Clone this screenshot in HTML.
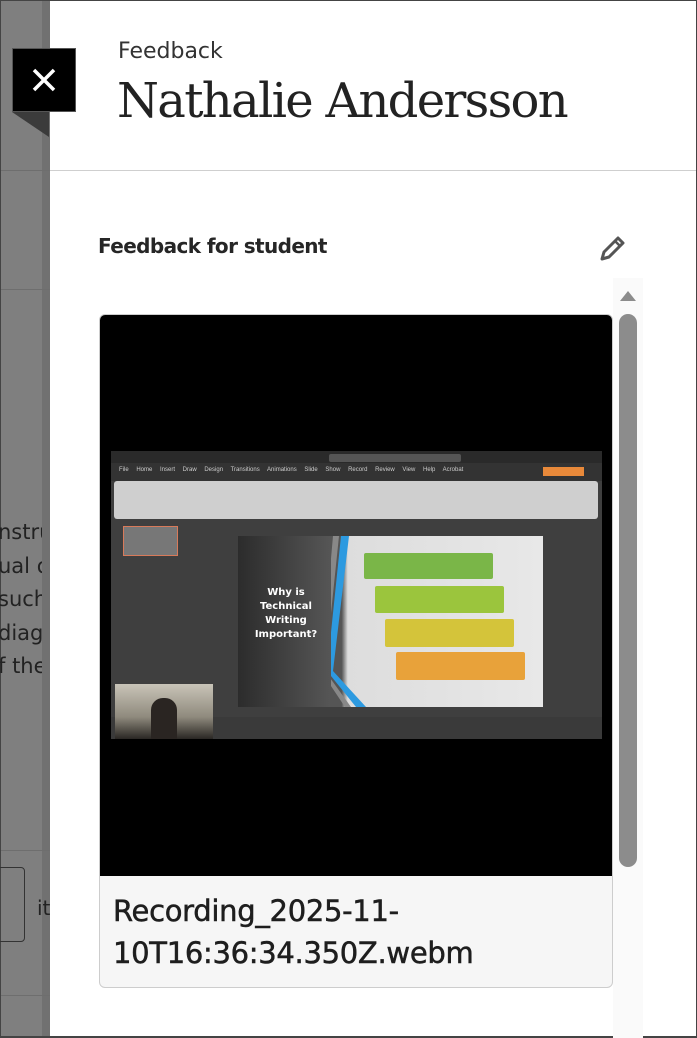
<!DOCTYPE html>
<html><head><meta charset="utf-8"><style>
*{margin:0;padding:0;box-sizing:border-box}
body{width:697px;height:1038px;position:relative;overflow:hidden;background:#fff;font-family:"Liberation Sans","DejaVu Sans",sans-serif}
.a{position:absolute}
</style></head><body>
<div class="a" style="left:0;top:0;width:50px;height:1038px;background:#7f7f7f"></div>
<div class="a" style="left:42px;top:0;width:8px;height:1038px;background:#717171"></div>
<div class="a" style="left:0;top:170px;width:50px;height:1px;background:#6e6e6e"></div>
<div class="a" style="left:0;top:289px;width:50px;height:1px;background:#6e6e6e"></div>
<div class="a" style="left:0;top:850px;width:50px;height:1px;background:#6e6e6e"></div>
<div class="a" style="left:0;top:995px;width:50px;height:1px;background:#6e6e6e"></div>
<div class="a" style="left:0;top:0;width:697px;height:1px;background:#444"></div>
<div class="a" style="left:0;top:0;width:1px;height:1038px;background:#444"></div>
<div class="a" style="left:0;top:1036px;width:697px;height:2px;background:#444"></div>
<div class="a" style="left:696px;top:0;width:1px;height:1038px;background:#444"></div>
<div class="a" style="left:-2px;top:516px;font:21px/33.5px 'DejaVu Sans',sans-serif;color:#222;white-space:pre;width:44px;overflow:hidden">nstru
ual o
such
diagr
f they</div>
<div class="a" style="left:-10px;top:867px;width:35px;height:75px;border:1px solid #333;border-radius:4px"></div>
<div class="a" style="left:37px;top:896px;font:20px 'DejaVu Sans',sans-serif;color:#222">it</div>
<div class="a" style="left:12px;top:112px;width:0;height:0;border-left:37px solid transparent;border-top:25px solid #3b3b3b;"></div>
<div class="a" style="left:12px;top:48px;width:64px;height:64px;background:#000;border:1px solid #555"></div>
<svg class="a" style="left:30px;top:66px" width="28" height="28" viewBox="0 0 28 28"><path d="M4 4L24 24M24 4L4 24" stroke="#fff" stroke-width="3.5"/></svg>
<div class="a" style="left:118px;top:39px;font:22px 'DejaVu Sans',sans-serif;color:#333">Feedback</div>
<div class="a" style="left:117px;top:73px;font:48px 'DejaVu Serif','Liberation Serif',serif;color:#222;letter-spacing:-1.7px">Nathalie Andersson</div>
<div class="a" style="left:50px;top:170px;width:646px;height:1px;background:#cfcfcf"></div>
<div class="a" style="left:98px;top:234px;font:bold 20px 'DejaVu Sans',sans-serif;color:#262626;letter-spacing:-0.6px">Feedback for student</div>
<svg class="a" style="left:598px;top:233px" width="30" height="30" viewBox="0 0 30 30"><path d="M4 26L6 19L20 5L25 10L11 24Z" fill="none" stroke="#555" stroke-width="3" stroke-linejoin="round"/><path d="M17 8L22 13" stroke="#555" stroke-width="2.5"/></svg>
<div class="a" style="left:613px;top:278px;width:30px;height:760px;background:#fafafa"></div>
<svg class="a" style="left:619px;top:289px" width="18" height="14"><path d="M1 12L9 2L17 12Z" fill="#8c8c8c"/></svg>
<div class="a" style="left:619px;top:314px;width:18px;height:553px;background:#8c8c8c;border-radius:9px"></div>
<div class="a" style="left:99px;top:314px;width:514px;height:674px;border:1px solid #cdcdcd;border-radius:6px;background:#f6f6f6;overflow:hidden">
 <div class="a" style="left:0;top:0;width:512px;height:561px;background:#000"></div>
 <div class="a" style="left:13px;top:575px;font:29px/42px 'DejaVu Sans',sans-serif;color:#1e1e1e;letter-spacing:-0.3px;-webkit-text-stroke:0.5px #1e1e1e">Recording_2025-11-<br>10T16:36:34.350Z.webm</div>
</div>
<div class="a" style="left:111px;top:451px;width:491px;height:288px;background:#3f3f3f;overflow:hidden">
 <div class="a" style="left:0;top:0;width:491px;height:12px;background:#2a2a2a"></div>
 <div class="a" style="left:218px;top:3px;width:132px;height:8px;background:#555;border-radius:2px"></div>
 <div class="a" style="left:0;top:12px;width:491px;height:18px;background:#333"></div>
 <div class="a" style="left:8px;top:16px;font:6px sans-serif;color:#ccc;white-space:nowrap;word-spacing:6px">File Home Insert Draw Design Transitions Animations Slide Show Record Review View Help Acrobat</div>
 <div class="a" style="left:432px;top:16px;width:41px;height:9px;background:#e8893a"></div>
 <div class="a" style="left:3px;top:30px;width:484px;height:38px;background:#cfcfcf;border-radius:3px"></div>
 <div class="a" style="left:12px;top:75px;width:55px;height:30px;border:1px solid #d87a5a;background:#777"></div>
 <div class="a" style="left:127px;top:85px;width:305px;height:171px;background:linear-gradient(90deg,#2c2c2c 0,#555 30%,#555 34%,#ddd 36%,#e8e8e8 100%)"></div>
 <svg class="a" style="left:220px;top:85px" width="40" height="171"><path d="M10 0L18 0L2 135L35 171L25 171L-4 135Z" fill="#2d9ae0"/><path d="M2 0L8 0L-6 135L20 171L14 171L-10 135Z" fill="#888"/></svg>
 <div class="a" style="left:140px;top:135px;width:70px;text-align:center;font:bold 10px/14px 'DejaVu Sans',sans-serif;color:#fff">Why is Technical Writing Important?</div>
 <div class="a" style="left:253px;top:102px;width:129px;height:26px;background:#7ab648;border-radius:2px"></div>
 <div class="a" style="left:264px;top:135px;width:129px;height:27px;background:#9bc53d;border-radius:2px"></div>
 <div class="a" style="left:274px;top:168px;width:129px;height:28px;background:#d4c43a;border-radius:2px"></div>
 <div class="a" style="left:285px;top:201px;width:129px;height:28px;background:#e8a23a;border-radius:2px"></div>
 <div class="a" style="left:0;top:266px;width:491px;height:22px;background:#3a3a3a"></div>
 <div class="a" style="left:4px;top:233px;width:98px;height:55px;background:linear-gradient(180deg,#c9c4b8,#8f8a7d 60%,#2a2724)"></div>
 <div class="a" style="left:40px;top:247px;width:26px;height:41px;background:#2a2522;border-radius:12px 12px 0 0"></div>
</div>
</body></html>
